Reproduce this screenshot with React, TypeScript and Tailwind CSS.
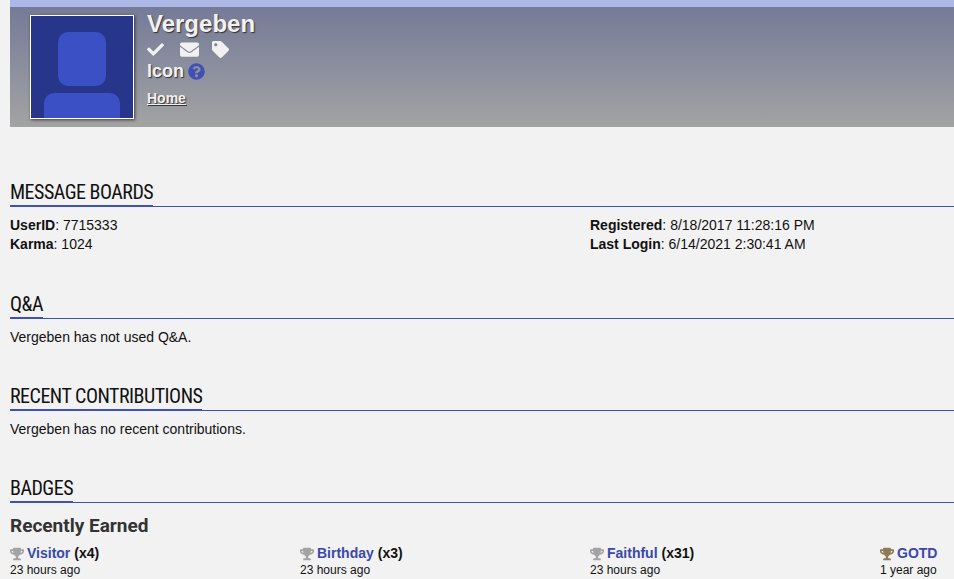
import { FaCheck, FaEnvelope, FaTag, FaTrophy, FaQuestionCircle } from 'react-icons/fa';

const badges = [
  { name: 'Visitor', count: '(x4)', when: '23 hours ago', color: 'text-[#a3a3a3]' },
  { name: 'Birthday', count: '(x3)', when: '23 hours ago', color: 'text-[#a3a3a3]' },
  { name: 'Faithful', count: '(x31)', when: '23 hours ago', color: 'text-[#a3a3a3]' },
  { name: 'GOTD', count: '', when: '1 year ago', color: 'text-[#8f7a55]' },
];

function SectionHeading({ title }: { title: string }) {
  return (
    <div className="border-b border-[#3f51b5] h-[30px] flex">
      <h2 className="border-b-2 border-[#3f51b5] h-[30px] font-['Roboto',sans-serif] [font-stretch:75%] text-[20px] leading-[30px] text-[#111] tracking-[-0.5px] font-normal">
        {title}
      </h2>
    </div>
  );
}

export default function App() {
  return (
    <div className="h-[579px] overflow-hidden bg-[#f2f2f2] pl-[10px] font-['Liberation_Sans',Arial,sans-serif] text-[14px] leading-[19px] text-[#111]">
      {/* Profile header */}
      <div className="h-[127px] border-t-[7px] border-[#adb7e6] bg-gradient-to-b from-[#757a97] to-[#a3a3a3] pl-[20px] pt-[8px] flex gap-[13px]">
        <div className="w-[104px] h-[104px] border border-white bg-[#27358a] shadow-[1px_1px_3px_rgba(0,0,0,0.6)] flex flex-col items-center overflow-hidden">
          <div className="w-[48px] h-[54px] mt-[16px] rounded-[10px] bg-[#3a50c4] shrink-0" />
          <div className="w-[76px] h-[26px] mt-[7px] rounded-t-[10px] bg-[#3a50c4] shrink-0" />
        </div>
        <div className="text-[#f1f1f1] [text-shadow:1px_1px_1px_#333] font-bold">
          <div className="text-[24px] leading-[20px] mt-[-1px] h-[24px]">Vergeben</div>
          <div className="flex items-center h-[18px] mt-[2px]">
            <FaCheck className="w-[17px] h-[17px] mr-[16px]" />
            <FaEnvelope className="w-[19px] h-[19px] mr-[13px]" />
            <FaTag className="w-[17px] h-[17px]" />
          </div>
          <div className="flex items-center gap-[4px] text-[18px] leading-[20px] h-[20px] mt-[3px]">
            Icon
            <FaQuestionCircle className="w-[17px] h-[17px] text-[#3f51b5]" />
          </div>
          <div className="mt-[9px] text-[14px] leading-[16px] underline">Home</div>
        </div>
      </div>

      {/* Message boards */}
      <section className="mt-[50px]">
        <SectionHeading title="MESSAGE BOARDS" />
        <div className="grid grid-cols-[580px_1fr] mt-[9px]">
          <div>
            <div><b>UserID</b>: 7715333</div>
            <div><b>Karma</b>: 1024</div>
          </div>
          <div>
            <div><b>Registered</b>: 8/18/2017 11:28:16 PM</div>
            <div><b>Last Login</b>: 6/14/2021 2:30:41 AM</div>
          </div>
        </div>
      </section>

      {/* Q&A */}
      <section className="mt-[35px]">
        <SectionHeading title="Q&A" />
        <p className="mt-[9px]">Vergeben has not used Q&amp;A.</p>
      </section>

      {/* Recent contributions */}
      <section className="mt-[34px]">
        <SectionHeading title="RECENT CONTRIBUTIONS" />
        <p className="mt-[9px]">Vergeben has no recent contributions.</p>
      </section>

      {/* Badges */}
      <section className="mt-[34px]">
        <SectionHeading title="BADGES" />
        <h3 className="mt-[11px] font-['Roboto',sans-serif] font-bold text-[19px] leading-[24px] text-[#333]">
          Recently Earned
        </h3>
        <div className="grid grid-cols-[290px_290px_290px_auto] mt-[7px]">
          {badges.map((badge) => (
            <div key={badge.name} className="text-[14px] leading-[17px]">
              <div className="flex items-center font-bold">
                <FaTrophy className={`w-[14px] h-[14px] mr-[3px] ${badge.color}`} />
                <span className="text-[#3949ab]">{badge.name}</span>
                {badge.count && <span className="ml-[4px]">{badge.count}</span>}
              </div>
              <div className="text-[12px]">{badge.when}</div>
            </div>
          ))}
        </div>
      </section>
    </div>
  );
}
